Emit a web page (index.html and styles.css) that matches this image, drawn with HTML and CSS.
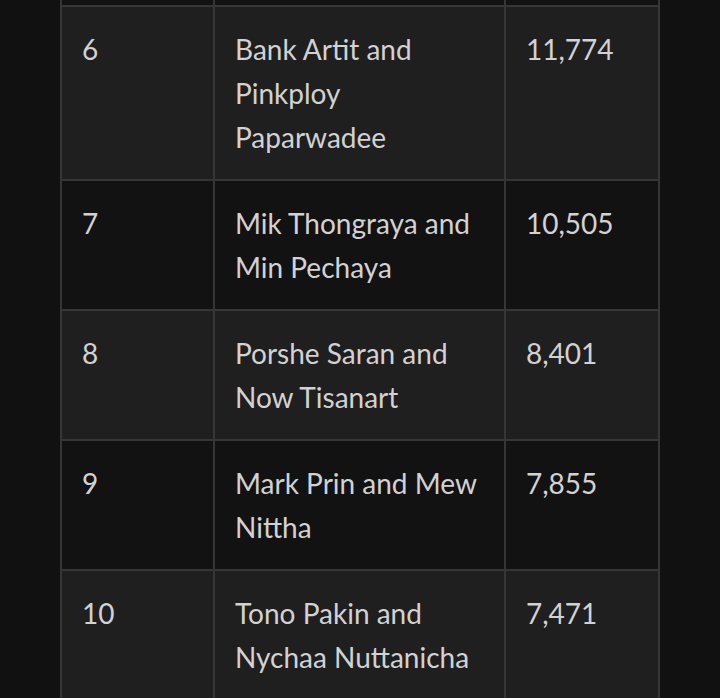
FILE: index.html
```html
<!DOCTYPE html>
<html lang="en">
<head>
<meta charset="utf-8">
<title>Ranking</title>
<link rel="stylesheet" href="styles.css">
</head>
<body>
<table class="rank-table">
  <colgroup>
    <col class="col-rank">
    <col class="col-name">
    <col class="col-votes">
  </colgroup>
  <tbody>
    <tr class="row dark cut"><td></td><td></td><td></td></tr>
    <tr class="row light"><td>6</td><td>Bank Artit and Pinkploy Paparwadee</td><td>11,774</td></tr>
    <tr class="row dark"><td>7</td><td>Mik Thongraya and Min Pechaya</td><td>10,505</td></tr>
    <tr class="row light"><td>8</td><td>Porshe Saran and Now Tisanart</td><td>8,401</td></tr>
    <tr class="row dark"><td>9</td><td>Mark Prin and Mew Nittha</td><td>7,855</td></tr>
    <tr class="row light"><td>10</td><td>Tono Pakin and Nychaa Nuttanicha</td><td>7,471</td></tr>
  </tbody>
</table>
</body>
</html>
```
FILE: styles.css
```css
html, body {
  margin: 0;
  padding: 0;
  background: #111111;
}
body {
  font-family: Lato, "Open Sans", sans-serif;
  color: #d2d2d2;
  overflow: hidden;
}
.rank-table {
  margin: -2px 0 0 60px;
  width: 600px;
  border-collapse: separate;
  border-spacing: 0;
  border-top: 2px solid #363636;
  border-left: 2px solid #363636;
  table-layout: fixed;
}
.col-rank { width: 153px; }
.col-name { width: 291px; }
.col-votes { width: 154px; }
.rank-table td {
  box-sizing: border-box;
  border-right: 2px solid #363636;
  border-bottom: 2px solid #363636;
  padding: 20px;
  font-size: 28px;
  line-height: 44px;
  vertical-align: top;
  text-align: left;
}
.row.light td { background: #1f1f1f; }
.row.dark td { background: #121212; }
.row.cut td {
  padding: 0;
  height: 7px;
  line-height: 5px;
}
```
